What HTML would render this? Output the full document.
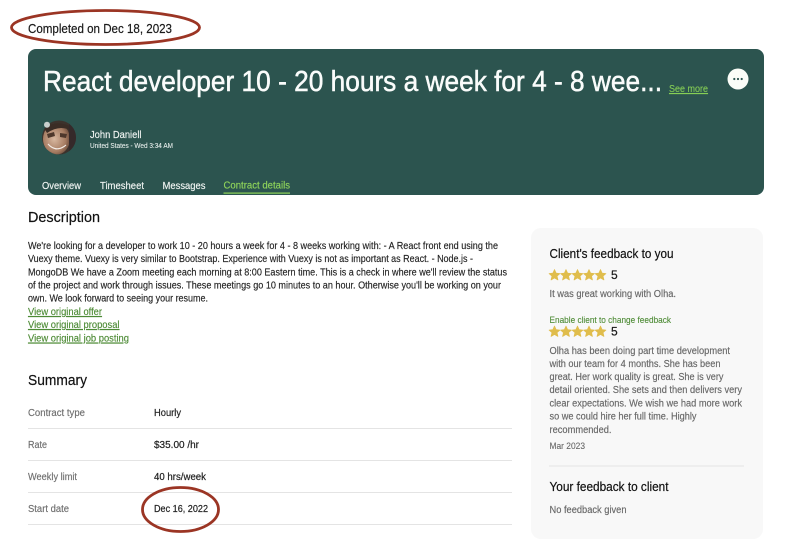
<!DOCTYPE html>
<html lang="en">
<head>
<meta charset="utf-8">
<title>Contract details</title>
<style>
html,body{margin:0;padding:0;background:#fff;width:800px;height:548px;overflow:hidden}
svg{display:block;position:absolute;left:0;top:0;filter:blur(.3px)}
text{font-family:"Liberation Sans",sans-serif;white-space:pre;paint-order:stroke}
.p{font-size:10.400px;fill:#222;stroke:#222;stroke-width:.15px}
.l{font-size:10.400px;fill:#4c8a34;stroke:#4c8a34;stroke-width:.15px;text-decoration:underline}
.g{font-size:10px;fill:#666;stroke:#666;stroke-width:.15px}
.k{font-size:10px;fill:#6e6e6e;stroke:#6e6e6e;stroke-width:.15px}
.v{font-size:10px;fill:#222;stroke:#222;stroke-width:.2px}
.h{font-size:15px;fill:#111;stroke:#111;stroke-width:.2px}
.t{font-size:10.400px;fill:#f2f6f4;stroke:#f2f6f4;stroke-width:.15px}
</style>
</head>
<body>
<svg width="800" height="548" viewBox="0 0 800 548" xmlns="http://www.w3.org/2000/svg">
<defs>
<clipPath id="av"><circle cx="59" cy="137.500" r="17"/></clipPath>
<path id="s" d="M0-5.400 1.600-1.800 5.400-1.400 2.500 1.100 3.400 4.900 0 2.900-3.400 4.900-2.500 1.100-5.400-1.400-1.600-1.800Z" fill="#e0bd4c" stroke="#e0bd4c" stroke-width=".8" stroke-linejoin="round"/>
<radialGradient id="sk" cx=".42" cy=".5" r=".6"><stop offset="0" stop-color="#d8b8a0"/><stop offset=".7" stop-color="#a67c62"/><stop offset="1" stop-color="#6b4c3c"/></radialGradient>
</defs>

<text x="28" y="33" font-size="13.300" fill="#1a1a1a" stroke="#1a1a1a" stroke-width=".2" textLength="144" lengthAdjust="spacingAndGlyphs">Completed on Dec 18, 2023</text>
<ellipse cx="105.500" cy="27.500" rx="94" ry="17" fill="none" stroke="#9b3524" stroke-width="2.800"/>

<rect x="28" y="49" width="736" height="146" rx="8" fill="#2c544f"/>
<text x="43" y="91" font-size="29" fill="#fafcfb" stroke="#fafcfb" stroke-width=".5" textLength="619" lengthAdjust="spacingAndGlyphs">React developer 10 - 20 hours a week for 4 - 8 wee...</text>
<text x="669" y="92" font-size="10.500" fill="#86cf55" stroke="#86cf55" stroke-width=".1" text-decoration="underline" textLength="39" lengthAdjust="spacingAndGlyphs">See more</text>
<circle cx="738" cy="79" r="10.500" fill="#fbfdf8"/>
<circle cx="734.300" cy="79" r="1.100" fill="#2c544f"/>
<circle cx="738" cy="79" r="1.100" fill="#2c544f"/>
<circle cx="741.700" cy="79" r="1.100" fill="#2c544f"/>

<g clip-path="url(#av)">
<rect x="42" y="120" width="34" height="35" fill="#3c322c"/>
<ellipse cx="56.500" cy="139" rx="13.500" ry="15.500" fill="url(#sk)"/>
<path d="M44 128Q56 119 72 127L72 131Q60 124 47 133Z" fill="#3a2c25"/>
<path d="M47 134 54 132 55 136 48 138ZM60 133 67 134 66 138 60 137Z" fill="#4e382c"/>
<path d="M48 144Q56 153 66 145Q62 149 56 149 51 148 48 144Z" fill="#f3ece6" stroke="#f3ece6" stroke-width="1"/>
<rect x="69" y="120" width="9" height="35" fill="#35292a"/>
</g>
<circle cx="47" cy="124.700" r="3" fill="#c9cfcd"/>

<text x="90" y="138" font-size="10.200" fill="#f2f6f4" stroke="#f2f6f4" stroke-width=".15" textLength="51.500" lengthAdjust="spacingAndGlyphs">John Daniell</text>
<text x="90" y="148" font-size="7" fill="#e8eeec" stroke="#e8eeec" stroke-width=".08" textLength="83" lengthAdjust="spacingAndGlyphs">United States - Wed 3:34 AM</text>

<text class="t" x="42" y="189" textLength="39" lengthAdjust="spacingAndGlyphs">Overview</text>
<text class="t" x="100" y="189" textLength="44" lengthAdjust="spacingAndGlyphs">Timesheet</text>
<text class="t" x="162.500" y="189" textLength="43" lengthAdjust="spacingAndGlyphs">Messages</text>
<text x="223.500" y="188.500" font-size="10.400" fill="#8fd45a" stroke="#8fd45a" stroke-width=".15" textLength="66.500" lengthAdjust="spacingAndGlyphs">Contract details</text>
<rect x="223.500" y="192.500" width="66.500" height="1.200" fill="#8fd45a"/>

<text class="h" x="28" y="222" textLength="72" lengthAdjust="spacingAndGlyphs">Description</text>
<text class="p" x="28" y="249" textLength="470" lengthAdjust="spacingAndGlyphs">We're looking for a developer to work 10 - 20 hours a week for 4 - 8 weeks working with: - A React front end using the</text>
<text class="p" x="28" y="262" textLength="445" lengthAdjust="spacingAndGlyphs">Vuexy theme. Vuexy is very similar to Bootstrap. Experience with Vuexy is not as important as React. - Node.js -</text>
<text class="p" x="28" y="275.500" textLength="479" lengthAdjust="spacingAndGlyphs">MongoDB We have a Zoom meeting each morning at 8:00 Eastern time. This is a check in where we'll review the status</text>
<text class="p" x="28" y="288.500" textLength="473" lengthAdjust="spacingAndGlyphs">of the project and work through issues. These meetings go 10 minutes to an hour. Otherwise you'll be working on your</text>
<text class="p" x="28" y="301.500" textLength="180" lengthAdjust="spacingAndGlyphs">own. We look forward to seeing your resume.</text>
<text class="l" x="28" y="315" textLength="74" lengthAdjust="spacingAndGlyphs">View original offer</text>
<text class="l" x="28" y="328" textLength="91.500" lengthAdjust="spacingAndGlyphs">View original proposal</text>
<text class="l" x="28" y="341.500" textLength="101" lengthAdjust="spacingAndGlyphs">View original job posting</text>

<text class="h" x="28" y="385" textLength="59" lengthAdjust="spacingAndGlyphs">Summary</text>
<text class="k" x="28" y="416" textLength="57" lengthAdjust="spacingAndGlyphs">Contract type</text>
<text class="v" x="154" y="416" textLength="27" lengthAdjust="spacingAndGlyphs">Hourly</text>
<rect x="28" y="428" width="484" height="1" fill="#e4e4e4"/>
<text class="k" x="28" y="448" textLength="19" lengthAdjust="spacingAndGlyphs">Rate</text>
<text class="v" x="154" y="448" textLength="45" lengthAdjust="spacingAndGlyphs">$35.00 /hr</text>
<rect x="28" y="460" width="484" height="1" fill="#e4e4e4"/>
<text class="k" x="28" y="480" textLength="49" lengthAdjust="spacingAndGlyphs">Weekly limit</text>
<text class="v" x="154" y="480" textLength="52" lengthAdjust="spacingAndGlyphs">40 hrs/week</text>
<rect x="28" y="492" width="484" height="1" fill="#e4e4e4"/>
<text class="k" x="28" y="512" textLength="41" lengthAdjust="spacingAndGlyphs">Start date</text>
<text class="v" x="154" y="512" textLength="54" lengthAdjust="spacingAndGlyphs">Dec 16, 2022</text>
<rect x="28" y="524" width="484" height="1" fill="#e4e4e4"/>
<ellipse cx="180.500" cy="509.500" rx="38" ry="22" fill="none" stroke="#9b3524" stroke-width="2.800"/>

<rect x="531" y="228" width="232" height="311" rx="10" fill="#f8f8f8"/>
<text x="549.500" y="258" font-size="13" fill="#111" stroke="#111" stroke-width=".2" textLength="124" lengthAdjust="spacingAndGlyphs">Client's feedback to you</text>
<use href="#s" x="554.500" y="275"/><use href="#s" x="566" y="275"/><use href="#s" x="577.500" y="275"/><use href="#s" x="589" y="275"/><use href="#s" x="600.500" y="275"/>
<text x="611" y="279" font-size="12" fill="#1a1a1a" stroke="#1a1a1a" stroke-width=".2">5</text>
<text class="g" x="549.500" y="297" textLength="126.500" lengthAdjust="spacingAndGlyphs">It was great working with Olha.</text>
<text x="549.500" y="323" font-size="9" fill="#4c8a34" stroke="#4c8a34" stroke-width=".1" textLength="121.500" lengthAdjust="spacingAndGlyphs">Enable client to change feedback</text>
<use href="#s" x="554.500" y="331.500"/><use href="#s" x="566" y="331.500"/><use href="#s" x="577.500" y="331.500"/><use href="#s" x="589" y="331.500"/><use href="#s" x="600.500" y="331.500"/>
<text x="611" y="335.500" font-size="12" fill="#1a1a1a" stroke="#1a1a1a" stroke-width=".2">5</text>
<text class="g" x="549.500" y="354" textLength="180.500" lengthAdjust="spacingAndGlyphs">Olha has been doing part time development</text>
<text class="g" x="549.500" y="367" textLength="171" lengthAdjust="spacingAndGlyphs">with our team for 4 months. She has been</text>
<text class="g" x="549.500" y="380" textLength="174" lengthAdjust="spacingAndGlyphs">great. Her work quality is great. She is very</text>
<text class="g" x="549.500" y="393" textLength="192.500" lengthAdjust="spacingAndGlyphs">detail oriented. She sets and then delivers very</text>
<text class="g" x="549.500" y="406.500" textLength="192.500" lengthAdjust="spacingAndGlyphs">clear expectations. We wish we had more work</text>
<text class="g" x="549.500" y="419.500" textLength="147" lengthAdjust="spacingAndGlyphs">so we could hire her full time. Highly</text>
<text class="g" x="549.500" y="433" textLength="62" lengthAdjust="spacingAndGlyphs">recommended.</text>
<text x="549.500" y="449" font-size="9" fill="#666" stroke="#666" stroke-width=".1" textLength="35.500" lengthAdjust="spacingAndGlyphs">Mar 2023</text>
<rect x="549" y="465.500" width="195" height="1" fill="#e4e4e4"/>
<text x="549.500" y="491" font-size="12.800" fill="#111" stroke="#111" stroke-width=".2" textLength="119" lengthAdjust="spacingAndGlyphs">Your feedback to client</text>
<text class="g" x="549.500" y="513" textLength="77" lengthAdjust="spacingAndGlyphs">No feedback given</text>
</svg>
</body>
</html>
